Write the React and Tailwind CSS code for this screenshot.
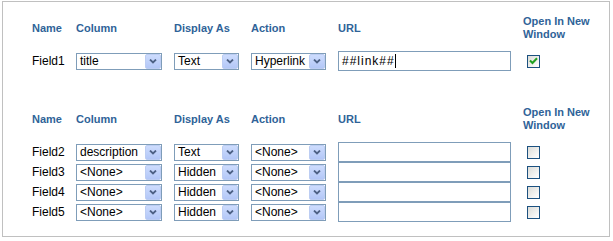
import React from 'react';

const FONT = { fontFamily: '"Liberation Sans", Arial, sans-serif' };

function Select({ value, width }) {
  return (
    <div
      className="flex h-[17px] items-stretch border border-[#7f9db9] bg-white"
      style={{ width }}
    >
      <div className="flex flex-1 items-center overflow-hidden whitespace-nowrap pl-[3px] text-[12px] leading-none text-black">
        {value}
      </div>
      <div className="flex w-[16px] items-center justify-center rounded-[2px] border border-[#bccdf3] bg-gradient-to-b from-[#cddcfd] to-[#b3c7f7]">
        <svg width="8" height="5" viewBox="0 0 8 5">
          <path d="M1 0.5 L4 3.5 L7 0.5" fill="none" stroke="#4d6185" strokeWidth="1.8" />
        </svg>
      </div>
    </div>
  );
}

function Checkbox({ checked }) {
  return (
    <div className="ml-[4px] flex h-[13px] w-[13px] items-center justify-center border border-[#1c5180] bg-gradient-to-br from-[#dcdcd7] to-white">
      {checked && (
        <svg width="9" height="8" viewBox="0 0 9 8">
          <path d="M1 3.5 L3.5 6 L8 1.2" fill="none" stroke="#21a121" strokeWidth="2" />
        </svg>
      )}
    </div>
  );
}

function Header() {
  return (
    <div className="flex h-[26px] items-center text-[11px] font-bold leading-[13px] text-[#2f6398]">
      <div className="w-[44px]">Name</div>
      <div className="w-[98px]">Column</div>
      <div className="w-[77px]">Display As</div>
      <div className="w-[87px]">Action</div>
      <div className="w-[185px]">URL</div>
      <div className="w-[80px]">Open In New Window</div>
    </div>
  );
}

function Row({ name, column, display, action, url, checked, caret }) {
  return (
    <div className="flex h-[20px] items-center text-[12px] text-black">
      <div className="w-[44px]">{name}</div>
      <div className="w-[98px]">
        <Select value={column} width={86} />
      </div>
      <div className="w-[77px]">
        <Select value={display} width={65} />
      </div>
      <div className="w-[87px]">
        <Select value={action} width={75} />
      </div>
      <div className="w-[185px]">
        <div className="flex h-[20px] w-[173px] items-center border border-[#7f9db9] bg-white pl-[3px] text-[12px] tracking-[1px]">
          {url}
          {caret && <span className="inline-block h-[14px] w-[1px] bg-black" />}
        </div>
      </div>
      <Checkbox checked={checked} />
    </div>
  );
}

export default function App() {
  const rows = [
    { name: 'Field2', column: 'description', display: 'Text', action: '<None>' },
    { name: 'Field3', column: '<None>', display: 'Hidden', action: '<None>' },
    { name: 'Field4', column: '<None>', display: 'Hidden', action: '<None>' },
    { name: 'Field5', column: '<None>', display: 'Hidden', action: '<None>' },
  ];

  return (
    <div className="min-h-[241px] bg-white pl-[2px] pt-[1px]" style={FONT}>
      <div className="h-[236px] w-[608px] border border-[#c0c0c0] pl-[29px] pt-[13px]">
        <Header />
        <div className="mt-[10px]">
          <Row
            name="Field1"
            column="title"
            display="Text"
            action="Hyperlink"
            url="##link##"
            checked
            caret
          />
        </div>
        <div className="mt-[35px]">
          <Header />
        </div>
        <div className="mt-[10px] flex flex-col">
          {rows.map((r) => (
            <Row key={r.name} {...r} url="" />
          ))}
        </div>
      </div>
    </div>
  );
}
